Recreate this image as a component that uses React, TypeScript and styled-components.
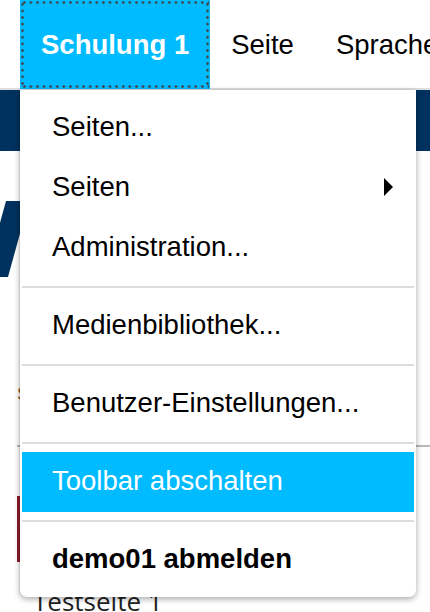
import React from 'react';
import styled, { createGlobalStyle } from 'styled-components';

const GlobalStyle = createGlobalStyle`
  html, body {
    margin: 0;
    padding: 0;
    background: #fff;
    overflow: hidden;
  }
  body {
    font-family: "Liberation Sans", Arial, Helvetica, sans-serif;
  }
`;

const ACCENT = '#00bbff';
const DOT = 'radial-gradient(circle, #444 1.1px, transparent 1.6px)';

const Page = styled.div`
  position: relative;
  width: 430px;
  height: 612px;
  overflow: hidden;
`;

const Toolbar = styled.nav`
  display: flex;
  height: 90px;
  padding-left: 20px;
  box-shadow: inset 0 -2px 0 #dddddd;
  box-sizing: border-box;
`;

const NavItem = styled.div<{ $active?: boolean }>`
  position: relative;
  display: flex;
  align-items: center;
  height: 89px;
  padding: 0 21px;
  font-size: 27.5px;
  white-space: nowrap;
  font-weight: ${p => (p.$active ? 700 : 400)};
  color: ${p => (p.$active ? '#fff' : '#000')};
  background: ${p => (p.$active ? ACCENT : 'transparent')};

  /* focus ring: round dots, drawn over the button */
  &::after {
    content: '';
    display: ${p => (p.$active ? 'block' : 'none')};
    position: absolute;
    inset: 1px;
    pointer-events: none;
    background-image: ${DOT}, ${DOT}, ${DOT}, ${DOT};
    background-size: 6.6px 3.4px, 6.6px 3.4px, 3.4px 6.6px, 3.4px 6.6px;
    background-position: 0 0, 0 100%, 0 0, 100% 0;
    background-repeat: repeat-x, repeat-x, repeat-y, repeat-y;
  }
`;

const HeaderBand = styled.div`
  height: 61px;
  background: #00325f;
`;

const Main = styled.main`
  display: flex;
  flex-direction: column;
`;

const LogoMark = styled.svg`
  display: block;
  margin-top: 50px;
`;

const Breadcrumb = styled.div`
  margin-top: 106px;
  padding-left: 17px;
  font-size: 18px;
  line-height: 22px;
  color: #8b6430;
  white-space: nowrap;
`;

const Rule = styled.div`
  margin: 40px 0 0 17px;
  height: 2px;
  background: #b8b8b8;
`;

const TitleMarker = styled.div`
  margin: 49px 0 0 17px;
  width: 3px;
  height: 66px;
  background: #8c1c2e;
`;

const PageTitle = styled.h1`
  margin: 24px 0 0 33px;
  font-family: "Open Sans", "Liberation Sans", sans-serif;
  font-weight: 400;
  font-size: 26px;
  line-height: 31px;
  color: #222;
`;

const Menu = styled.ul`
  position: absolute;
  top: 90px;
  left: 20px;
  width: 396px;
  margin: 0;
  padding: 8px 2px 7px;
  box-sizing: border-box;
  list-style: none;
  background: #fff;
  border-radius: 0 0 7px 7px;
  box-shadow: 0 2px 6px rgba(0, 0, 0, 0.35), -1px 0 0 rgba(0, 0, 0, 0.08);
`;

const MenuItem = styled.li<{ $highlight?: boolean; $bold?: boolean }>`
  display: flex;
  align-items: center;
  justify-content: space-between;
  height: 60px;
  padding: 0 21px 3px 30px;
  box-sizing: border-box;
  font-size: 27.5px;
  line-height: 57px;
  white-space: nowrap;
  font-weight: ${p => (p.$bold ? 700 : 400)};
  color: ${p => (p.$highlight ? '#fff' : '#000')};
  background: ${p => (p.$highlight ? ACCENT : 'transparent')};
`;

const Separator = styled.li`
  height: 2px;
  margin: 8px 0;
  background: #dddddd;
`;

const SubArrow = () => (
  <svg width="9" height="18" viewBox="0 0 9 18">
    <polygon points="0,0 9,9 0,18" fill="#000" />
  </svg>
);

export default function App() {
  return (
    <>
      <GlobalStyle />
      <Page>
        <Toolbar>
          <NavItem $active>Schulung 1</NavItem>
          <NavItem>Seite</NavItem>
          <NavItem>Sprache</NavItem>
        </Toolbar>
        <HeaderBand />
        <Main>
          <LogoMark width="40" height="76" viewBox="0 0 40 76">
            <polygon points="6,0 29,0 8,76 -15,76" fill="#00325f" />
          </LogoMark>
          <Breadcrumb>Sie sind hier: Startseite</Breadcrumb>
          <Rule />
          <TitleMarker />
          <PageTitle>Testseite 1</PageTitle>
        </Main>

        <Menu>
          <MenuItem>Seiten...</MenuItem>
          <MenuItem>
            Seiten
            <SubArrow />
          </MenuItem>
          <MenuItem>Administration...</MenuItem>
          <Separator />
          <MenuItem>Medienbibliothek...</MenuItem>
          <Separator />
          <MenuItem>Benutzer-Einstellungen...</MenuItem>
          <Separator />
          <MenuItem $highlight>Toolbar abschalten</MenuItem>
          <Separator />
          <MenuItem $bold>demo01 abmelden</MenuItem>
        </Menu>
      </Page>
    </>
  );
}
